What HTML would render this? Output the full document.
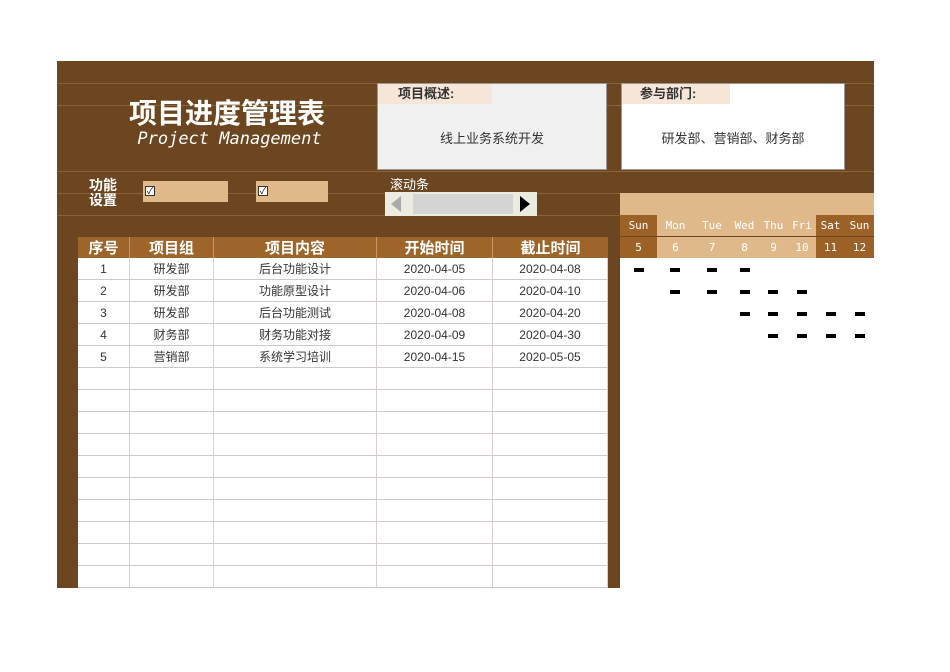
<!DOCTYPE html><html><head><meta charset="utf-8"><style>
*{margin:0;padding:0;box-sizing:border-box}
body{width:950px;height:672px;background:#fff;position:relative;font-family:"Liberation Sans","Noto Sans CJK SC",sans-serif;overflow:hidden}
.a{position:absolute}
.hl{position:absolute;height:1px;background:#8a6438}
.th{position:absolute;top:237px;height:21px;background:#9e652b;color:#fff;font-weight:bold;font-size:15px;border-right:1px solid #c99766;display:flex;align-items:center;justify-content:center}
.td{position:absolute;height:22px;border-right:1px solid #d8d0d0;border-bottom:1px solid #d0c8c8;font-size:12px;color:#333;display:flex;align-items:center;justify-content:center}
.dh{position:absolute;height:21px;font-family:"DejaVu Sans Mono","Liberation Mono",monospace;font-size:11px;color:#fff;display:flex;align-items:center;justify-content:center}
.bar{position:absolute;width:10px;height:4px;background:#000}
</style></head><body>
<div class="a" style="left:57px;top:61px;width:817px;height:197px;background:#6b4620"></div>
<div class="a" style="left:57px;top:258px;width:21px;height:330px;background:#6b4620"></div>
<div class="a" style="left:608px;top:258px;width:12px;height:330px;background:#6b4620"></div>
<div class="hl" style="left:57px;top:83px;width:817px"></div>
<div class="hl" style="left:57px;top:105px;width:817px"></div>
<div class="hl" style="left:57px;top:171px;width:817px"></div>
<div class="hl" style="left:57px;top:193px;width:563px"></div>
<div class="hl" style="left:57px;top:215px;width:563px"></div>
<div class="a" style="left:57px;top:92px;width:340px;text-align:center;color:#fff;font-size:28px;font-weight:bold;">项目进度管理表</div>
<div class="a" style="left:57px;top:129px;width:345px;text-align:center;color:#fff;font-size:17px;font-style:italic;font-family:'DejaVu Sans Mono',monospace;">Project Management</div>
<div class="a" style="left:377px;top:83px;width:230px;height:87px;background:#f0f0f0;border:1px solid #999"></div>
<div class="a" style="left:378px;top:84px;width:114px;height:20px;background:#f6e6d8;font-size:13px;font-weight:bold;color:#333;padding-left:20px;line-height:20px">项目概述:</div>
<div class="a" style="left:377px;top:128px;width:230px;text-align:center;font-size:13px;color:#333">线上业务系统开发</div>
<div class="a" style="left:621px;top:83px;width:224px;height:87px;background:#fff;border:1px solid #999"></div>
<div class="a" style="left:622px;top:84px;width:108px;height:20px;background:#f6e6d8;font-size:13px;font-weight:bold;color:#333;padding-left:18px;line-height:20px">参与部门:</div>
<div class="a" style="left:621px;top:128px;width:224px;text-align:center;font-size:13px;color:#333">研发部、营销部、财务部</div>
<div class="a" style="left:89px;top:178px;color:#fff;font-size:14px;font-weight:bold;line-height:15px">功能<br>设置</div>
<div class="a" style="left:143px;top:181px;width:85px;height:21px;background:#e0b98a"></div>
<div class="a" style="left:145px;top:186px;width:10px;height:10px;border:1px solid #333;background:#fff;font-size:9px;line-height:8px;text-align:center">✓</div>
<div class="a" style="left:256px;top:181px;width:72px;height:21px;background:#e0b98a"></div>
<div class="a" style="left:258px;top:186px;width:10px;height:10px;border:1px solid #333;background:#fff;font-size:9px;line-height:8px;text-align:center">✓</div>
<div class="a" style="left:390px;top:174px;color:#fff;font-size:13px">滚动条</div>
<div class="a" style="left:385px;top:192px;width:152px;height:24px;background:#ecebe0"></div>
<div class="a" style="left:413px;top:194px;width:100px;height:20px;background:#d4d4d4"></div>
<div class="a" style="left:391px;top:196px;width:0;height:0;border-top:8px solid transparent;border-bottom:8px solid transparent;border-right:10px solid #aaa"></div>
<div class="a" style="left:520px;top:196px;width:0;height:0;border-top:8px solid transparent;border-bottom:8px solid transparent;border-left:10px solid #000"></div>
<div class="a" style="left:620px;top:193px;width:254px;height:22px;background:#e0b98a"></div>
<div class="dh" style="left:620px;top:215px;width:37px;background:#9b6127">Sun</div>
<div class="dh" style="left:657px;top:215px;width:159px;background:#e0b98a"></div>
<div class="dh" style="left:657px;top:215px;width:37px">Mon</div>
<div class="dh" style="left:694px;top:215px;width:36px">Tue</div>
<div class="dh" style="left:730px;top:215px;width:29px">Wed</div>
<div class="dh" style="left:759px;top:215px;width:29px">Thu</div>
<div class="dh" style="left:788px;top:215px;width:28px">Fri</div>
<div class="dh" style="left:816px;top:215px;width:58px;background:#9b6127"></div>
<div class="dh" style="left:816px;top:215px;width:29px">Sat</div>
<div class="dh" style="left:845px;top:215px;width:29px">Sun</div>
<div class="dh" style="left:620px;top:237px;width:37px;background:#9b6127">5</div>
<div class="dh" style="left:657px;top:237px;width:159px;background:#e0b98a"></div>
<div class="dh" style="left:657px;top:237px;width:37px">6</div>
<div class="dh" style="left:694px;top:237px;width:36px">7</div>
<div class="dh" style="left:730px;top:237px;width:29px">8</div>
<div class="dh" style="left:759px;top:237px;width:29px">9</div>
<div class="dh" style="left:788px;top:237px;width:28px">10</div>
<div class="dh" style="left:816px;top:237px;width:58px;background:#9b6127"></div>
<div class="dh" style="left:816px;top:237px;width:29px">11</div>
<div class="dh" style="left:845px;top:237px;width:29px">12</div>
<div class="bar" style="left:634px;top:268px"></div><div class="bar" style="left:670px;top:268px"></div><div class="bar" style="left:707px;top:268px"></div><div class="bar" style="left:740px;top:268px"></div>
<div class="bar" style="left:670px;top:290px"></div><div class="bar" style="left:707px;top:290px"></div><div class="bar" style="left:740px;top:290px"></div><div class="bar" style="left:768px;top:290px"></div><div class="bar" style="left:797px;top:290px"></div>
<div class="bar" style="left:740px;top:312px"></div><div class="bar" style="left:768px;top:312px"></div><div class="bar" style="left:797px;top:312px"></div><div class="bar" style="left:826px;top:312px"></div><div class="bar" style="left:855px;top:312px"></div>
<div class="bar" style="left:768px;top:334px"></div><div class="bar" style="left:797px;top:334px"></div><div class="bar" style="left:826px;top:334px"></div><div class="bar" style="left:855px;top:334px"></div>
<div class="th" style="left:78px;width:52px">序号</div>
<div class="th" style="left:130px;width:84px">项目组</div>
<div class="th" style="left:214px;width:163px">项目内容</div>
<div class="th" style="left:377px;width:116px">开始时间</div>
<div class="th" style="left:493px;width:115px;border-right:none">截止时间</div>
<div id="rows"></div>
<script>
var d=[["1","研发部","后台功能设计","2020-04-05","2020-04-08"],["2","研发部","功能原型设计","2020-04-06","2020-04-10"],["3","研发部","后台功能测试","2020-04-08","2020-04-20"],["4","财务部","财务功能对接","2020-04-09","2020-04-30"],["5","营销部","系统学习培训","2020-04-15","2020-05-05"]];
var xs=[78,130,214,377,493,608],h="";
for(var r=0;r<15;r++){for(var c=0;c<5;c++){var t=d[r]?d[r][c]:"";h+='<div class="td" style="left:'+xs[c]+'px;top:'+(258+r*22)+'px;width:'+(xs[c+1]-xs[c])+'px">'+t+'</div>';}}
document.getElementById("rows").innerHTML=h;
</script>
</body></html>
